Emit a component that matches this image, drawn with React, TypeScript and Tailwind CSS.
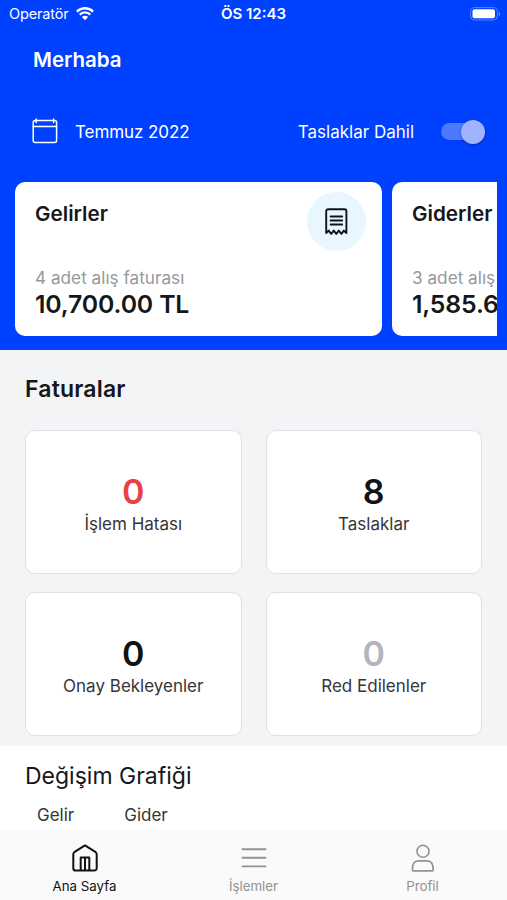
import { useState } from "react";
import type { ReactNode } from "react";

interface Invoice {
  id: number;
  label: string;
  count: number;
  color: string;
}

interface Summary {
  id: number;
  title: string;
  detail: string;
  total: string;
}

const summaries: Summary[] = [
  { id: 1, title: "Gelirler", detail: "4 adet alış faturası", total: "10,700.00 TL" },
  { id: 2, title: "Giderler", detail: "3 adet alış faturası", total: "1,585.60 TL" },
];

const invoices: Invoice[] = [
  { id: 1, label: "İşlem Hatası", count: 0, color: "text-[#ea4244]" },
  { id: 2, label: "Taslaklar", count: 8, color: "text-[#111215]" },
  { id: 3, label: "Onay Bekleyenler", count: 0, color: "text-[#111215]" },
  { id: 4, label: "Red Edilenler", count: 0, color: "text-[#b3b5ba]" },
];

const WifiIcon = () => (
  <svg width="18" height="14" viewBox="0 0 18 14" fill="none" stroke="white" strokeWidth="2.3">
    <path d="M0.9 4.6a11.5 11.5 0 0 1 16.2 0" />
    <path d="M3.7 7.6a7.5 7.5 0 0 1 10.6 0" />
    <path d="M9 13.2 5.9 10.1a4.4 4.4 0 0 1 6.2 0z" fill="white" stroke="none" />
  </svg>
);

const BatteryIcon = () => (
  <svg width="31" height="14" viewBox="0 0 31 14" fill="none">
    <rect x="0.6" y="0.6" width="26.8" height="12.4" rx="4" stroke="white" strokeOpacity="0.35" />
    <rect x="2.5" y="2.3" width="22.5" height="9" rx="2" fill="white" />
    <path d="M28.8 4.4c1.6.7 1.6 4.1 0 4.8z" fill="white" fillOpacity="0.45" />
  </svg>
);

const CalendarIcon = () => (
  <svg width="26" height="26" viewBox="0 0 26 26" fill="none" stroke="white" strokeWidth="1.5" strokeLinecap="round">
    <rect x="1.2" y="2.6" width="23.4" height="22" rx="2" />
    <path d="M1.2 8.4h23.4M4.2 1v3.4M21.6 1v3.4" />
  </svg>
);

const ReceiptIcon = () => (
  <svg width="24" height="28" viewBox="0 0 24 28" fill="none" stroke="#111215" strokeWidth="1.9" strokeLinejoin="round" strokeLinecap="round">
    <path d="M1.2 25V3.2a2 2 0 0 1 2-2h16.2a2 2 0 0 1 2 2V25l-2.5-2.4-2.5 3.2-2.6-3.2-2.5 3.2-2.5-3.2-2.6 3.2-2.5-3.2z" />
    <path d="M5.6 8.5h11.6M5.6 12.5h11.6M5.6 16.5h11.6" />
  </svg>
);

const HomeIcon = () => (
  <svg width="28" height="30" viewBox="0 0 28 30" fill="none" stroke="currentColor" strokeWidth="2" strokeLinejoin="round">
    <path d="M2.3 11.2c0-.9.3-1.5 1-2L14 2.4l10.7 6.8c.7.5 1 1.1 1 2v14a2.4 2.4 0 0 1-2.4 2.4H4.7a2.4 2.4 0 0 1-2.4-2.4z" />
    <path d="M9.7 27.6V14.4h8.6v13.2M14 14.4v13.2" />
  </svg>
);

const ListIcon = () => (
  <svg width="28" height="30" viewBox="0 0 28 30" fill="none" stroke="currentColor" strokeWidth="1.9" strokeLinecap="round">
    <path d="M2.5 6.3h23M2.5 14.8h23M2.5 23.4h23" />
  </svg>
);

const ProfileIcon = () => (
  <svg width="28" height="30" viewBox="0 0 28 30" fill="none" stroke="currentColor" strokeWidth="1.6">
    <circle cx="14" cy="8.3" r="6" />
    <path d="M4.2 27.9c-.5 0-.8-.3-.8-.8 0-5.7 2-9.2 5.6-9.2h9.6c3.6 0 5.6 3.5 5.6 9.2 0 .5-.3.8-.8.8z" />
  </svg>
);

const SummaryCard = ({ summary }: { summary: Summary }) => (
  <article className="relative h-[154px] w-[367px] shrink-0 rounded-[10px] bg-white pt-[18px] pl-5 whitespace-nowrap">
    <h2 className="text-[20.7px] leading-7 font-[580]">{summary.title}</h2>
    <p className="mt-[38px] text-[17.2px] leading-6 text-[#97989c]">{summary.detail}</p>
    <p className="-mt-px text-[24.8px] leading-[30px] font-[580] tracking-[-0.006em]">{summary.total}</p>
    <div className="absolute top-[10px] right-4 flex size-[59px] items-center justify-center rounded-full bg-[#e8f6ff]">
      <ReceiptIcon />
    </div>
  </article>
);

const Tab = ({ icon, label, active, onClick }: { icon: ReactNode; label: string; active: boolean; onClick: () => void }) => (
  <button
    onClick={onClick}
    className={`flex flex-1 flex-col items-center pt-[13px] ${active ? "text-[#111215]" : "text-[#929292]"}`}
  >
    {icon}
    <span className="mt-[3px] text-[13.3px] leading-5">{label}</span>
  </button>
);

const App = () => {
  const [tab, setTab] = useState("home");
  const [drafts, setDrafts] = useState(true);

  return (
    <div className="flex h-[900px] w-[507px] flex-col overflow-hidden bg-white font-['Inter',sans-serif] text-[#16171a]">
      <header className="h-[350px] shrink-0 bg-[#0040ff] text-white">
        <div className="grid h-[27px] grid-cols-3 items-center pr-[6px] pl-[9px] text-[14.5px]">
          <div className="-mr-2 flex items-center gap-[7px]">
            <span className="tracking-[-0.01em]">Operatör</span>
            <WifiIcon />
          </div>
          <span className="mt-[2px] -ml-[3px] text-center text-[15px] font-semibold">ÖS 12:43</span>
          <div className="flex justify-end">
            <BatteryIcon />
          </div>
        </div>

        <h1 className="mt-[19px] pl-[33px] text-[20.5px] leading-7 font-semibold">Merhaba</h1>

        <div className="mt-[43px] flex h-[30px] items-center pr-[22px] pl-8 text-[17px]">
          <div className="-mt-[2px]">
            <CalendarIcon />
          </div>
          <span className="mt-px ml-[17px] tracking-[-0.005em]">Temmuz 2022</span>
          <span className="mt-px ml-auto">Taslaklar Dahil</span>
          <button
            onClick={() => setDrafts(!drafts)}
            className={`-mt-px ml-[27px] flex h-[17px] w-11 items-center rounded-full bg-[#4d79ff] ${drafts ? "justify-end" : "justify-start"}`}
          >
            <span className="size-6 shrink-0 rounded-full bg-[#a0b3ff] shadow-[0_1px_3px_rgba(0,0,0,0.35)]" />
          </button>
        </div>

        <div className="mt-[35px] mr-[10px] ml-[15px] flex gap-[10px] overflow-hidden text-[#16171a]">
          {summaries.map((s) => (
            <SummaryCard key={s.id} summary={s} />
          ))}
        </div>
      </header>

      <section className="h-[396px] shrink-0 bg-[#f2f4f6] px-[25px] pt-[23px]">
        <h2 className="text-[23px] leading-8 font-[580] tracking-[0.008em]">Faturalar</h2>
        <div className="mt-[25px] grid grid-cols-2 gap-x-6 gap-y-[18px]">
          {invoices.map((i) => (
            <div key={i.id} className="flex h-[144px] flex-col items-center rounded-[10px] border border-[#dfe1e4] bg-white pt-10">
              <span className={`text-[34px] leading-[42px] font-[580] ${i.color}`}>{i.count}</span>
              <span className="text-[17px] leading-[22px] text-[#343538]">{i.label}</span>
            </div>
          ))}
        </div>
      </section>

      <section className="flex-1 overflow-hidden px-[25px] pt-[14px]">
        <h2 className="text-[23px] leading-8">Değişim Grafiği</h2>
        <div className="mt-[11px] flex gap-[50px] pl-3 text-[17px] leading-6 text-[#343538]">
          <span>Gelir</span>
          <span>Gider</span>
        </div>
      </section>

      <nav className="flex h-[70px] shrink-0 bg-[#fafafa]">
        <Tab icon={<HomeIcon />} label="Ana Sayfa" active={tab === "home"} onClick={() => setTab("home")} />
        <Tab icon={<ListIcon />} label="İşlemler" active={tab === "list"} onClick={() => setTab("list")} />
        <Tab icon={<ProfileIcon />} label="Profil" active={tab === "profile"} onClick={() => setTab("profile")} />
      </nav>
    </div>
  );
};

export default App;
